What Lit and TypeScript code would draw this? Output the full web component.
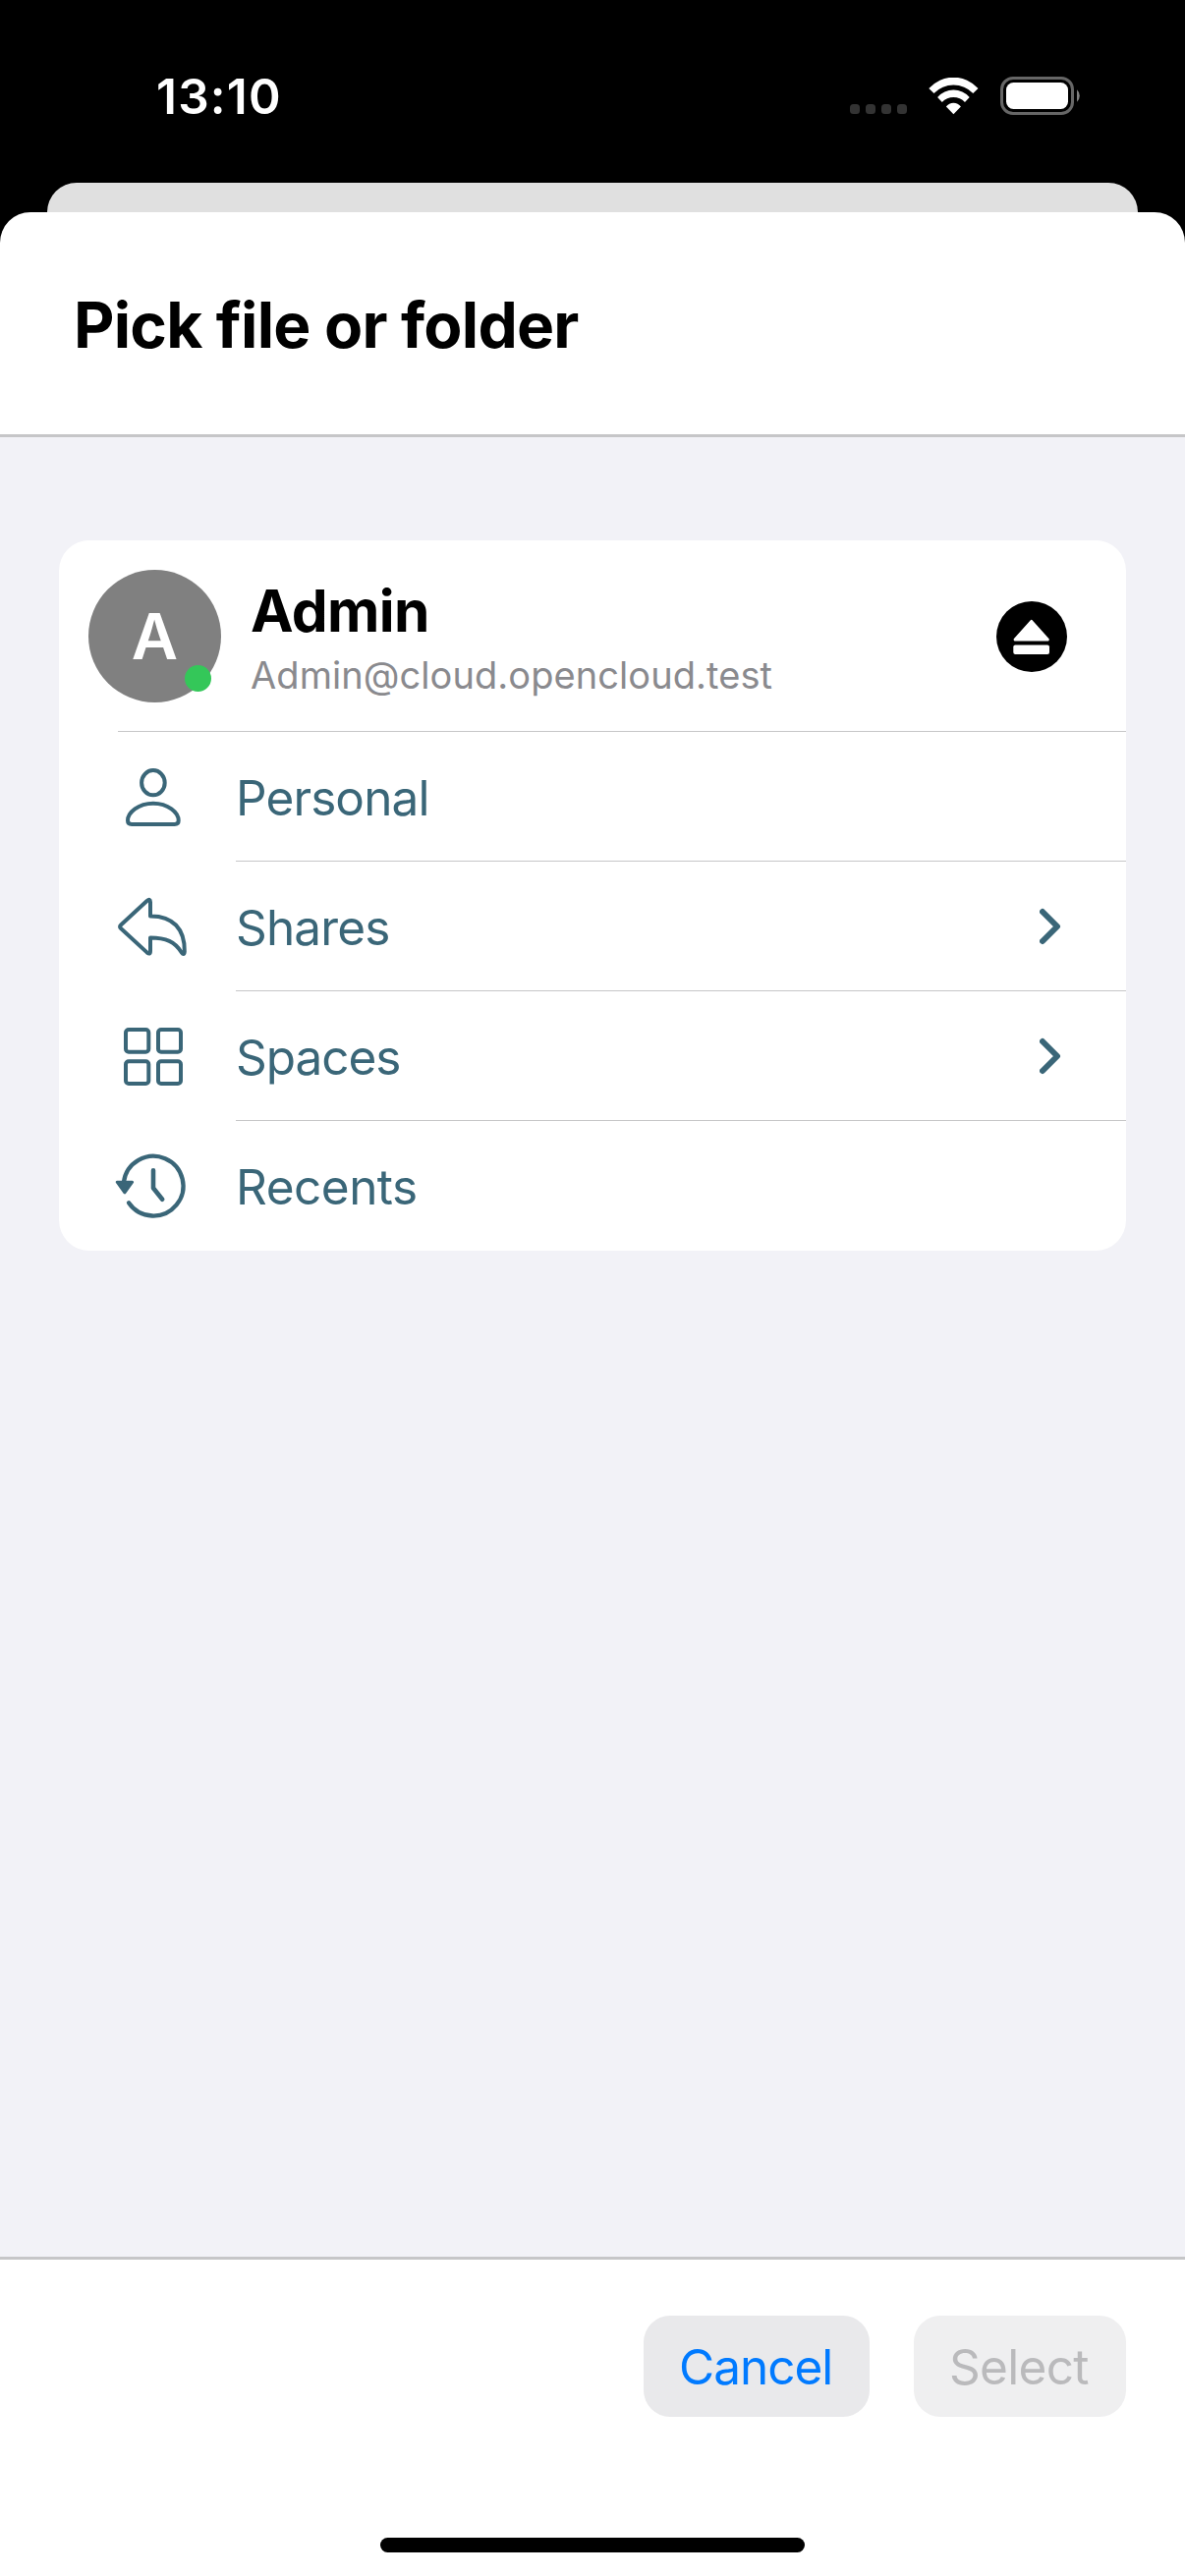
import { LitElement, html, svg, css, nothing, type SVGTemplateResult } from "lit";
import { customElement, property } from "lit/decorators.js";

interface Entry {
  label: string;
  icon: SVGTemplateResult;
  tracking: number;
  expandable?: boolean;
}

const personIcon = svg`
  <ellipse cx="47.9" cy="51.7" rx="11.8" ry="12.6" />
  <path d="M26 94H69.7Q73.7 94 73.7 90.3C73.7 82 63 72.8 47.9 72.8C32.8 72.8 22 82 22 90.3Q22 94 26 94Z" />`;

const replyIcon = svg`
  <path d="M15 64.5L41.5 40Q45 37.2 45 41.3V55.4C68 55.2 80.2 68.5 79.8 91.5Q79.4 96 76.6 92.2C70 81.5 61 77.5 45 77.4V91Q45 95.4 41.5 92.4L15 68Q13.1 66.2 15 64.5Z" />`;

const gridIcon = svg`
  <rect x="20" y="39" width="23.3" height="22.7" rx="3" />
  <rect x="53" y="39" width="23" height="22.7" rx="3" />
  <rect x="20" y="71.3" width="23.3" height="22.7" rx="3" />
  <rect x="53" y="71.3" width="23" height="22.7" rx="3" />`;

const clockIcon = svg`
  <path d="M17.9 62.5A30.4 30.4 0 1 1 23 83.3" stroke-width="4.3" />
  <path class="solid" d="M11.2 62.2H26.6L18.9 72.8Z" stroke-width="3" />
  <path d="M48 50.3V68.3L57.2 79.8" stroke-width="4.6" />`;

const entries: Entry[] = [
  { label: "Personal", icon: personIcon, tracking: -0.9 },
  { label: "Shares", icon: replyIcon, tracking: -0.85, expandable: true },
  { label: "Spaces", icon: gridIcon, tracking: -1.05, expandable: true },
  { label: "Recents", icon: clockIcon, tracking: -0.5 },
];

@customElement("status-bar")
export class StatusBar extends LitElement {
  static styles = css`
    :host {
      display: flex;
      align-items: flex-start;
      justify-content: space-between;
      height: 186px;
      padding: 68px 106px 0 159px;
      box-sizing: border-box;
      color: #fff;
    }
    .time {
      font-size: 49.5px;
      line-height: 60px;
      font-weight: 600;
      letter-spacing: 1.2px;
    }
    .signals {
      display: flex;
      align-items: flex-end;
      padding-top: 10px;
    }
    .dots {
      display: flex;
      gap: 6px;
      margin: 0 22px 1px 0;
    }
    .dot {
      width: 10px;
      height: 10px;
      border-radius: 3.5px;
      background: #333;
    }
    .wifi {
      display: block;
      margin: 0 22px 0 0;
    }
    .battery {
      display: block;
    }
  `;

  render() {
    return html`
      <span class="time">13:10</span>
      <div class="signals">
        <div class="dots">${[0, 1, 2, 3].map(() => html`<span class="dot"></span>`)}</div>
        <svg class="wifi" width="51" height="38" viewBox="0 0 51 38" fill="#fff">
          <path d="M0.3 11A33.5 33.5 0 0 1 50.5 11L45.3 15.9A28 28 0 0 0 5.5 15.9Z" />
          <path d="M9.1 19.9A21.8 21.8 0 0 1 41.7 19.9L37 24.9A16.2 16.2 0 0 0 13.8 24.9Z" />
          <path d="M17.9 29.4A9.5 9.5 0 0 1 32.9 29.4L25.4 37.2Z" />
        </svg>
        <svg class="battery" width="82" height="39" viewBox="0 0 82 39">
          <rect x="1.5" y="1.5" width="72" height="36" rx="11.5" fill="none" stroke="#666" stroke-width="3" />
          <rect x="6" y="6" width="63" height="27" rx="7.5" fill="#fff" />
          <path d="M78 13.2A8.5 8.5 0 0 1 78 25.8Z" fill="#808080" />
        </svg>
      </div>
    `;
  }
}

@customElement("account-header")
export class AccountHeader extends LitElement {
  @property() name = "";
  @property() address = "";

  static styles = css`
    :host {
      display: block;
    }
    .head {
      display: flex;
      align-items: flex-start;
      height: 194px;
      padding: 30px 60px 0 30px;
      box-sizing: border-box;
    }
    .avatar {
      position: relative;
      display: flex;
      align-items: center;
      justify-content: center;
      width: 135px;
      height: 135px;
      border-radius: 50%;
      background: #808080;
      color: #fff;
      font-size: 65px;
      line-height: 80px;
      font-weight: 600;
    }
    .presence {
      position: absolute;
      right: 10px;
      bottom: 11px;
      width: 27px;
      height: 27px;
      border-radius: 50%;
      background: #34c759;
    }
    .who {
      flex: 1;
      display: flex;
      flex-direction: column;
      gap: 7px;
      padding: 6px 0 0 30px;
    }
    .name {
      font-size: 58.5px;
      line-height: 71px;
      font-weight: 700;
      letter-spacing: -0.6px;
      color: #000;
    }
    .address {
      font-size: 38px;
      line-height: 46px;
      letter-spacing: 0.07px;
      color: #8a8a8e;
    }
    .eject {
      display: block;
      margin-top: 32px;
    }
    .line {
      height: 1px;
      margin-left: 60px;
      background: #c6c6c8;
    }
  `;

  render() {
    return html`
      <div class="head">
        <div class="avatar">${this.name.charAt(0)}<span class="presence"></span></div>
        <div class="who">
          <span class="name">${this.name}</span>
          <span class="address">${this.address}</span>
        </div>
        <svg class="eject" width="72" height="72" viewBox="0 0 72 72">
          <circle cx="36" cy="36" r="36" fill="#000" />
          <path d="M35.7 20.4L52.3 39.1H19.1Z" fill="#fff" stroke="#fff" stroke-width="3" stroke-linejoin="round" />
          <rect x="17.3" y="44.4" width="36.7" height="9.6" rx="2" fill="#fff" />
        </svg>
      </div>
      <div class="line"></div>
    `;
  }
}

@customElement("location-row")
export class LocationRow extends LitElement {
  @property({ attribute: false }) entry!: Entry;

  static styles = css`
    :host {
      display: flex;
      height: 132px;
      padding-left: 48px;
      color: #3a6678;
    }
    .icon {
      flex: none;
      margin-right: 36px;
      fill: none;
      stroke: currentColor;
      stroke-width: 4;
      stroke-linecap: round;
      stroke-linejoin: round;
    }
    .icon .solid {
      fill: currentColor;
    }
    .body {
      flex: 1;
      display: flex;
      justify-content: space-between;
      align-items: flex-start;
      padding: 37px 66px 0 0;
      border-bottom: 1px solid #c6c6c8;
      box-sizing: border-box;
    }
    :host(:last-of-type) .body {
      border-bottom-color: transparent;
    }
    .label {
      font-size: 49.5px;
      line-height: 60px;
    }
    .chevron {
      display: block;
      margin-top: 10px;
    }
  `;

  render() {
    const { label, icon, tracking, expandable } = this.entry;
    return html`
      <svg class="icon" width="96" height="132" viewBox="0 0 96 132">${icon}</svg>
      <div class="body">
        <span class="label" style="letter-spacing:${tracking}px">${label}</span>
        ${expandable
          ? html`<svg class="chevron" width="22" height="38" viewBox="0 0 22 38">
              <path d="M3 4L18 19L3 34" fill="none" stroke="currentColor" stroke-width="6" stroke-linecap="round" stroke-linejoin="round" />
            </svg>`
          : nothing}
      </div>
    `;
  }
}

@customElement("app-root")
export class AppRoot extends LitElement {
  static styles = css`
    :host {
      display: flex;
      flex-direction: column;
      height: 2622px;
      background: #000;
      font-family: Inter, "Liberation Sans", sans-serif;
    }
    .behind {
      height: 30px;
      margin: 0 48px;
      border-radius: 30px 30px 0 0;
      background: #e0e0e0;
    }
    .sheet {
      flex: 1;
      display: flex;
      flex-direction: column;
      border-radius: 31px 31px 0 0;
      background: #fff;
      overflow: hidden;
    }
    .title {
      height: 229px;
      margin: 0;
      padding: 76px 75px 0;
      box-sizing: border-box;
      border-bottom: 3px solid #c6c6c8;
      font-size: 64px;
      line-height: 77px;
      font-weight: 700;
      letter-spacing: -0.78px;
      color: #000;
    }
    .content {
      flex: 1;
      padding: 105px 60px 0;
      background: #f2f2f7;
    }
    .card {
      border-radius: 31px;
      background: #fff;
      overflow: hidden;
    }
    .footer {
      display: flex;
      flex-direction: column;
      align-items: center;
      justify-content: space-between;
      height: 325px;
      padding: 57px 60px 24px;
      box-sizing: border-box;
      border-top: 3px solid #c6c6c8;
    }
    .actions {
      align-self: stretch;
      display: flex;
      justify-content: flex-end;
      gap: 45px;
    }
    .button {
      height: 103px;
      padding: 22px 0 21px 36px;
      box-sizing: border-box;
      border: 0;
      border-radius: 27px;
      font-family: inherit;
      font-size: 49.5px;
      line-height: 60px;
      text-align: left;
    }
    .cancel {
      width: 230px;
      background: #e9e9eb;
      color: #007aff;
      letter-spacing: -1px;
    }
    .select {
      width: 216px;
      background: #efeff0;
      color: #bababc;
      letter-spacing: -0.7px;
    }
    .indicator {
      width: 432px;
      height: 15px;
      border-radius: 8px;
      background: #000;
    }
  `;

  render() {
    return html`
      <status-bar></status-bar>
      <div class="behind"></div>
      <main class="sheet">
        <h1 class="title">Pick file or folder</h1>
        <section class="content">
          <div class="card">
            <account-header name="Admin" address="Admin@cloud.opencloud.test"></account-header>
            ${entries.map((entry) => html`<location-row .entry=${entry}></location-row>`)}
          </div>
        </section>
        <footer class="footer">
          <div class="actions">
            <button class="button cancel">Cancel</button>
            <button class="button select" disabled>Select</button>
          </div>
          <div class="indicator"></div>
        </footer>
      </main>
    `;
  }
}
